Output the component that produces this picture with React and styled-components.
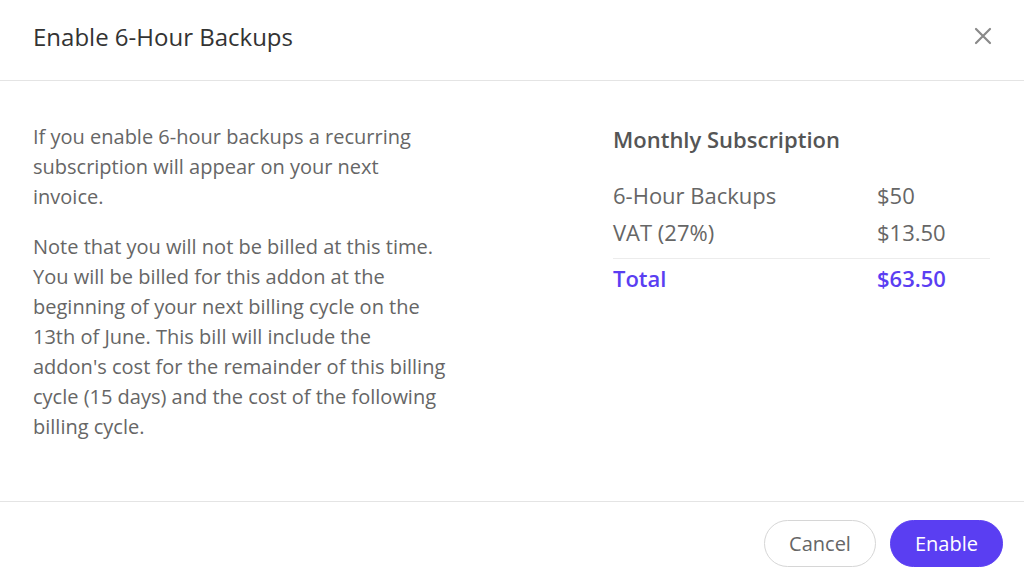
import styled, { createGlobalStyle } from "styled-components";

const Global = createGlobalStyle`
    html, body {
        margin: 0;
        padding: 0;
        background: #fff;
        font-family: "Open Sans", "Noto Sans", sans-serif;
    }
`

function App() {
    return (
        <Modal>
            <Global />
            <Header>
                <Title>Enable 6-Hour Backups</Title>
                <CloseButton aria-label="Close">
                    <svg width="18" height="18" viewBox="0 0 18 18">
                        <path d="M2 2 L16 16 M16 2 L2 16" stroke="#8a8a8a" strokeWidth="2.2" strokeLinecap="round" />
                    </svg>
                </CloseButton>
            </Header>
            <Body>
                <Text>
                    <p>If you enable 6-hour backups a recurring subscription will appear on your next invoice.</p>
                    <p>Note that you will not be billed at this time. You will be billed for this addon at the beginning of your next billing cycle on the 13th of June. This bill will include the addon's cost for the remainder of this billing cycle (15 days) and the cost of the following billing cycle.</p>
                </Text>
                <Summary>
                    <SummaryTitle>Monthly Subscription</SummaryTitle>
                    <Row>
                        <span>6-Hour Backups</span>
                        <span>$50</span>
                    </Row>
                    <Row>
                        <span>VAT (27%)</span>
                        <span>$13.50</span>
                    </Row>
                    <Row total>
                        <span>Total</span>
                        <span>$63.50</span>
                    </Row>
                </Summary>
            </Body>
            <Footer>
                <Button>Cancel</Button>
                <Button primary>Enable</Button>
            </Footer>
        </Modal>
    );
}

export default App;

const Modal = styled.div`
    width: 1024px;
    height: 576px;
    display: flex;
    flex-direction: column;
    background: #fff;
`

const Header = styled.div`
    height: 81px;
    box-sizing: border-box;
    padding: 0 32px 8px 33px;
    display: flex;
    align-items: center;
    justify-content: space-between;
    border-bottom: 1px solid #e4e4e4;
`

const Title = styled.h1`
    margin: 0;
    font-size: 24px;
    font-weight: 400;
    color: #333;
`

const CloseButton = styled.button`
    border: none;
    background: none;
    padding: 0;
    display: flex;
    cursor: pointer;
`

const Body = styled.div`
    flex: 1;
    display: grid;
    grid-template-columns: 416px 377px;
    column-gap: 164px;
    padding: 41px 34px 0 33px;
`

const Text = styled.div`
    font-size: 20px;
    line-height: 30px;
    color: #666;

    p {
        margin: 0 0 20px;
    }
`

const Summary = styled.div`
    padding-top: 2px;
`

const SummaryTitle = styled.h2`
    margin: 0 0 23px;
    font-size: 22px;
    font-weight: 600;
    line-height: 30px;
    color: #555;
`

const Row = styled.div`
    display: grid;
    grid-template-columns: 264px 1fr;
    font-size: 22px;
    line-height: 37px;
    color: ${p => (p.total ? "#5a3ef2" : "#666")};
    font-weight: ${p => (p.total ? 600 : 400)};
    ${p => p.total && `
        border-top: 1px solid #ececec;
        margin-top: 7px;
        line-height: 38px;
    `}
`

const Footer = styled.div`
    height: 75px;
    box-sizing: border-box;
    border-top: 1px solid #e4e4e4;
    display: flex;
    justify-content: flex-end;
    align-items: flex-start;
    gap: 14px;
    padding: 18px 21px 0 0;
`

const Button = styled.button`
    height: 47px;
    width: ${p => (p.primary ? "113px" : "112px")};
    border-radius: 24px;
    font-family: "Open Sans", "Noto Sans", sans-serif;
    font-size: 20px;
    cursor: pointer;
    border: 1px solid ${p => (p.primary ? "#5a3ef2" : "#d6d6d6")};
    background: ${p => (p.primary ? "#5a3ef2" : "#fff")};
    color: ${p => (p.primary ? "#fff" : "#666")};
    font-weight: 400;
`
